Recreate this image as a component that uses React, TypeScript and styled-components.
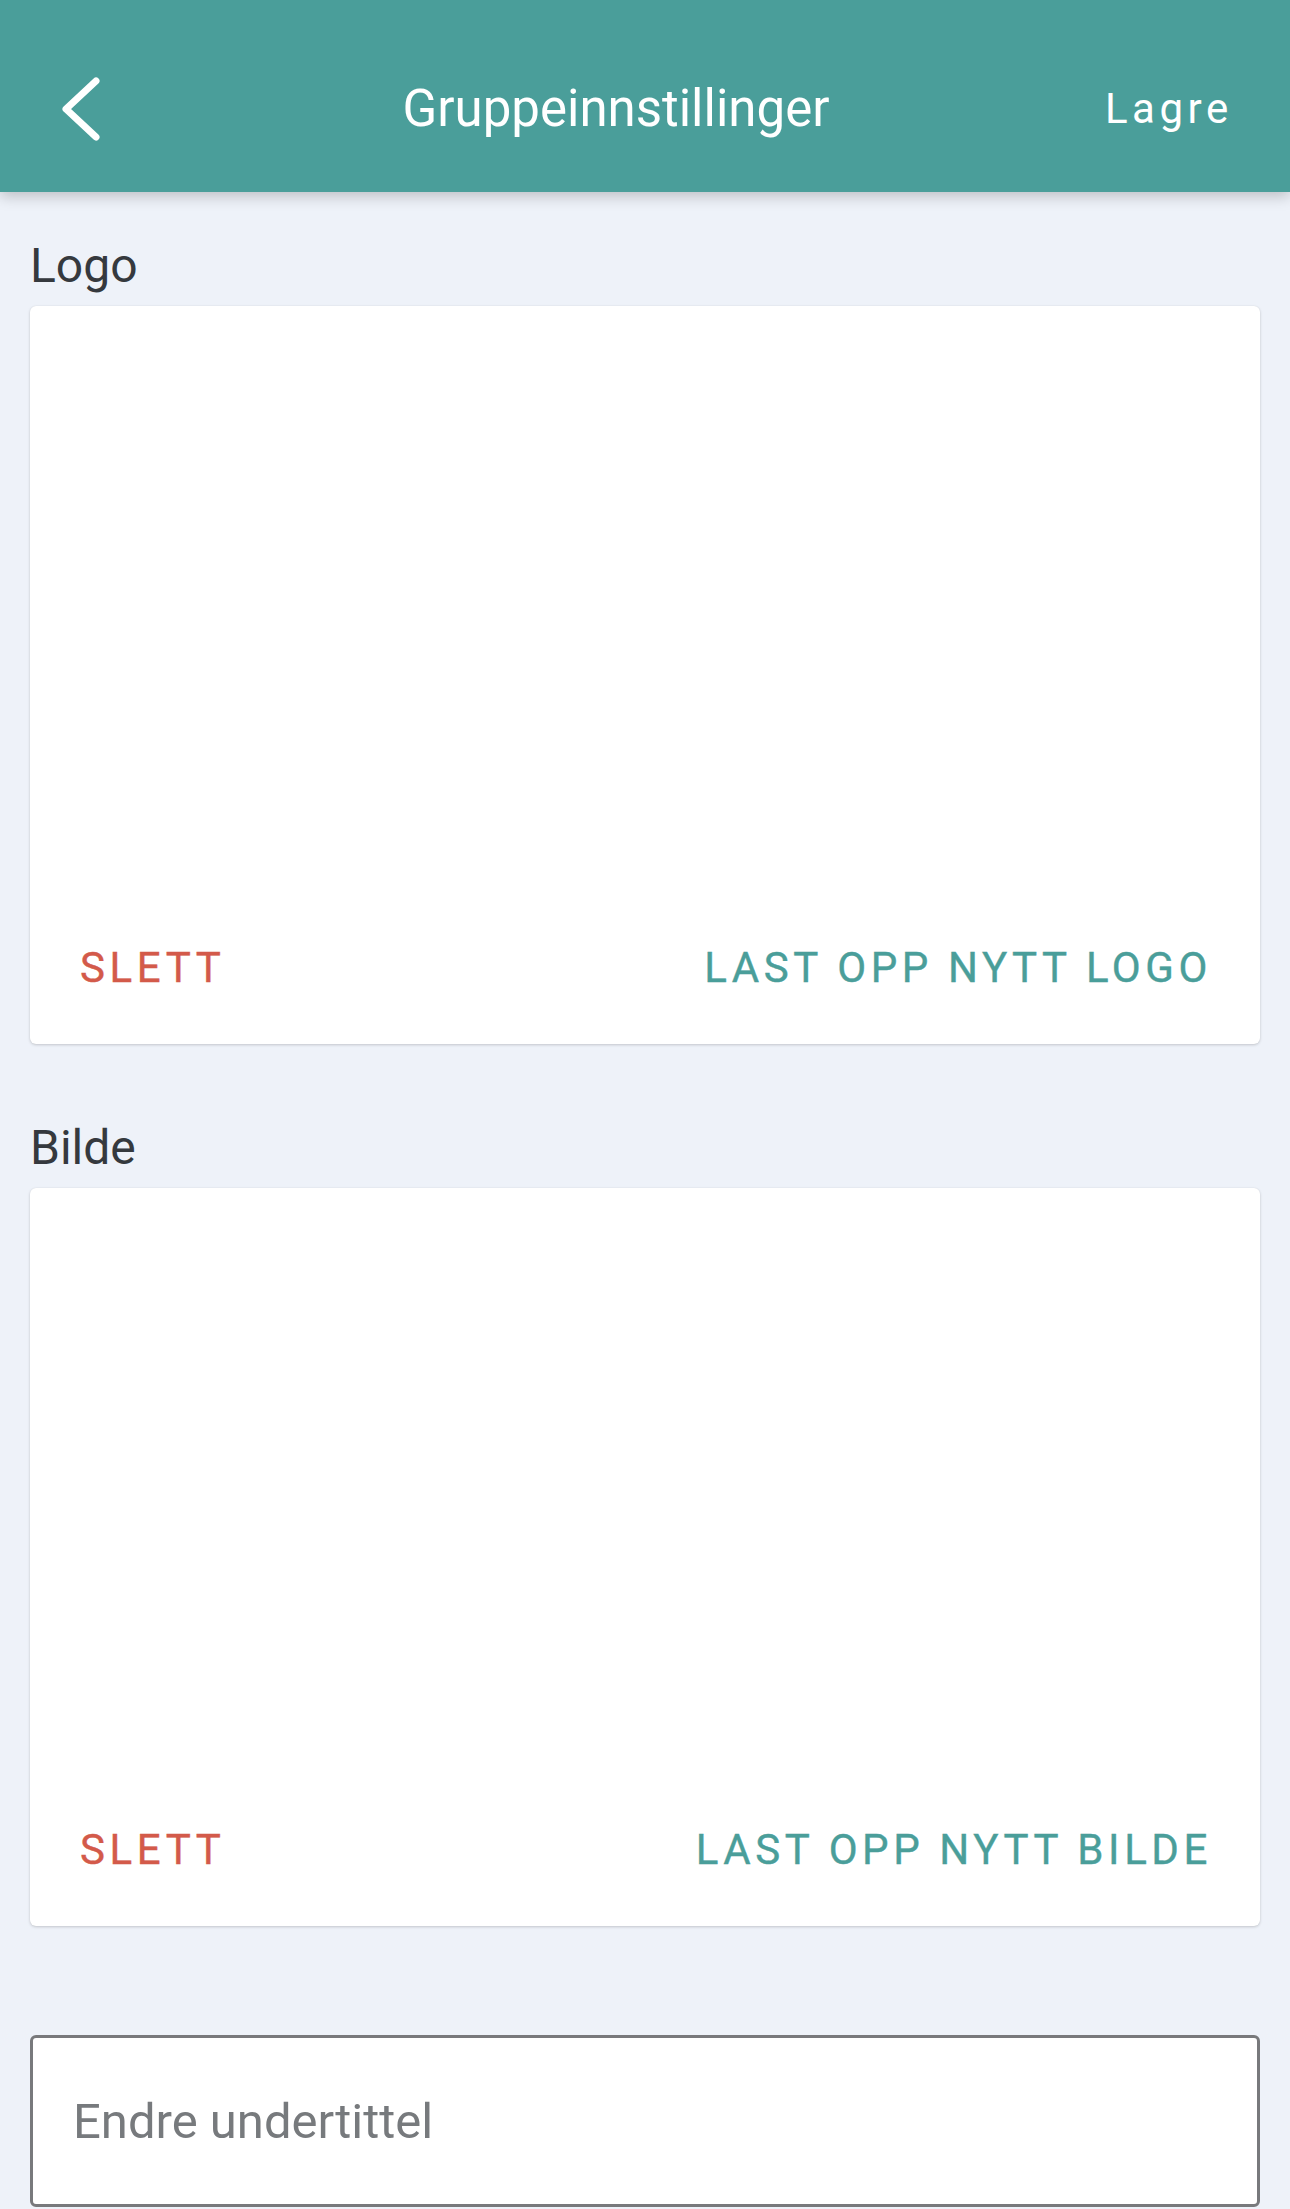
import styled, { createGlobalStyle } from "styled-components";

const GlobalStyle = createGlobalStyle`
  html, body {
    margin: 0;
    padding: 0;
    background: #eef2f9;
  }
  body {
    font-family: Roboto, "Noto Sans", "Liberation Sans", sans-serif;
  }
`;

interface ButtonProps {
  danger?: boolean;
}

const Page = styled.div`
  min-height: 2209px;
  background: #eef2f9;
`;

const Header = styled.header`
  height: 192px;
  box-sizing: border-box;
  padding-top: 24px;
  background: #4a9e9a;
  display: flex;
  align-items: center;
  box-shadow: 0 4px 14px rgba(0, 0, 0, 0.22);
  position: relative;
  z-index: 1;
`;

const BackButton = styled.button`
  width: 152px;
  height: 100%;
  padding: 0 0 0 58px;
  border: none;
  background: none;
  display: flex;
  align-items: center;
  cursor: pointer;
`;

const Title = styled.h1`
  flex: 1;
  margin: 0;
  text-align: center;
  color: #fff;
  font-size: 51px;
  font-weight: 400;
`;

const SaveButton = styled.button`
  width: 210px;
  height: 100%;
  box-sizing: border-box;
  padding: 0 0 0 25px;
  border: none;
  background: none;
  color: #fff;
  font-family: inherit;
  font-size: 42px;
  font-weight: 400;
  letter-spacing: 4.5px;
  text-align: left;
  cursor: pointer;
`;

const Content = styled.main`
  padding: 46px 30px 0;
  display: flex;
  flex-direction: column;
`;

const Section = styled.section`
  & + & {
    margin-top: 76px;
  }
`;

const Label = styled.div`
  font-size: 48px;
  line-height: 56px;
  color: #35393e;
  margin-bottom: 12px;
`;

const Card = styled.div`
  height: 738px;
  background: #fff;
  border-radius: 6px;
  box-shadow: 0 1px 3px rgba(0, 0, 0, 0.18), 0 0 1px rgba(0, 0, 0, 0.08);
  display: flex;
  flex-direction: column;
  justify-content: flex-end;
`;

const ButtonRow = styled.div`
  display: flex;
  justify-content: space-between;
  padding: 0 48px 23px 50px;
`;

const TextButton = styled.button<ButtonProps>`
  height: 108px;
  padding: 0;
  border: none;
  background: none;
  font-family: inherit;
  font-size: 42px;
  font-weight: 400;
  letter-spacing: 4.6px;
  color: ${(p) => (p.danger ? "#d35a4a" : "#4a9e9a")};
  -webkit-text-stroke: 0.4px currentColor;
  cursor: pointer;
`;

const SubtitleInput = styled.input`
  margin-top: 109px;
  height: 172px;
  box-sizing: border-box;
  width: 100%;
  border: 3px solid #78797c;
  border-radius: 6px;
  background: #fff;
  padding: 0 40px;
  font-family: inherit;
  font-size: 49px;
  color: #333;
  outline: none;
  &::placeholder {
    color: #777a7d;
  }
`;

const BackIcon = () => (
  <svg width="44" height="70" viewBox="0 0 44 70">
    <path
      d="M38 8 L8 36 L38 64"
      fill="none"
      stroke="#fff"
      strokeWidth="7"
      strokeLinecap="round"
      strokeLinejoin="round"
    />
  </svg>
);

const ImageSection = ({ label, upload }: { label: string; upload: string }) => (
  <Section>
    <Label>{label}</Label>
    <Card>
      <ButtonRow>
        <TextButton danger>SLETT</TextButton>
        <TextButton>{upload}</TextButton>
      </ButtonRow>
    </Card>
  </Section>
);

export default function App() {
  return (
    <Page>
      <GlobalStyle />
      <Header>
        <BackButton aria-label="Tilbake">
          <BackIcon />
        </BackButton>
        <Title>Gruppeinnstillinger</Title>
        <SaveButton>Lagre</SaveButton>
      </Header>
      <Content>
        <ImageSection label="Logo" upload="LAST OPP NYTT LOGO" />
        <ImageSection label="Bilde" upload="LAST OPP NYTT BILDE" />
        <SubtitleInput placeholder="Endre undertittel" />
      </Content>
    </Page>
  );
}
